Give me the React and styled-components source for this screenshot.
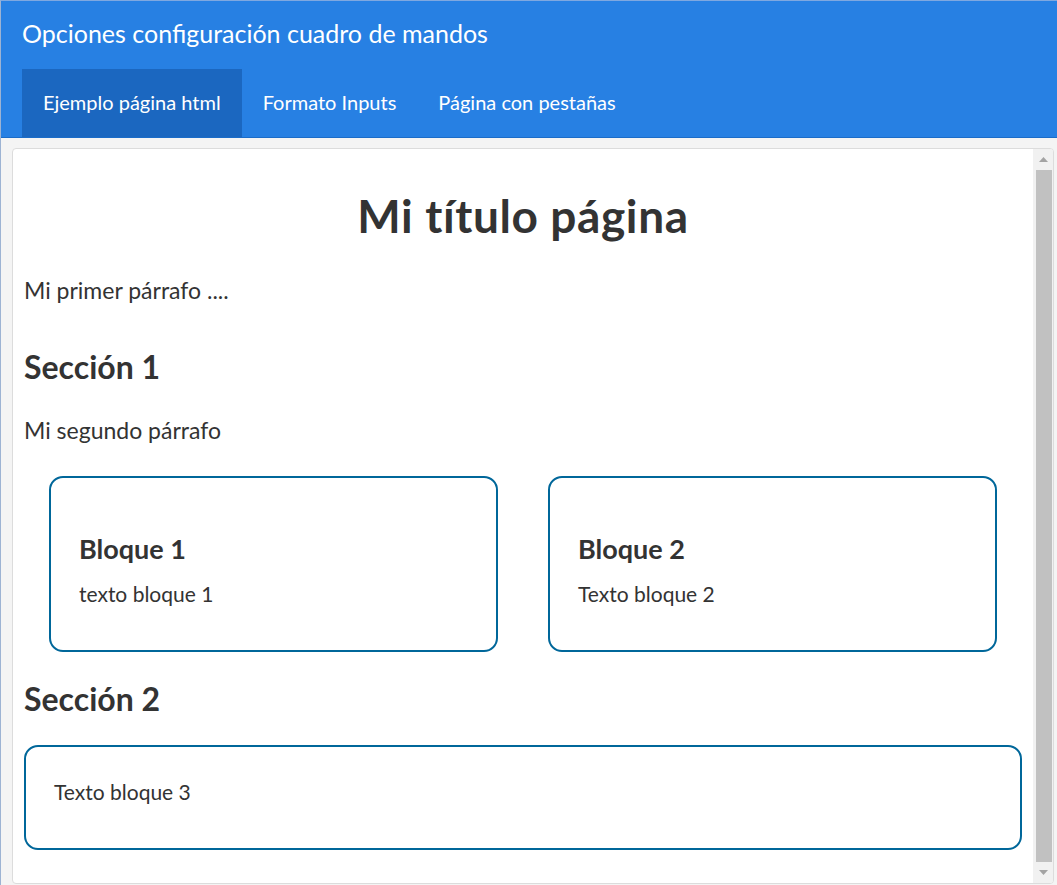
import React from "react";
import styled, { createGlobalStyle } from "styled-components";

const Global = createGlobalStyle`
  html, body { margin: 0; padding: 0; }
  body {
    background: #f4f4f4;
    font-family: Lato, "Noto Sans", sans-serif;
    color: #333;
    width: 1057px;
    height: 885px;
    overflow: hidden;
  }
`;

const Frame = styled.div`
  height: 885px;
  border-left: 1px solid #9db3d3;
  border-top: 1px solid #7fa8e0;
  box-sizing: border-box;
  display: flex;
  flex-direction: column;
`;

const Header = styled.header`
  background: #2780e3;
  border-bottom: 1px solid #1b6cc8;
  padding: 0 0 0 21px;
  display: flex;
  flex-direction: column;
`;

const AppTitle = styled.div`
  color: #fff;
  font-size: 25px;
  height: 68px;
  line-height: 64px;
`;

const Tabs = styled.nav`
  display: flex;
  height: 68px;
`;

const Tab = styled.div`
  color: #fff;
  font-size: 20px;
  padding: 0 21px 2px;
  display: flex;
  align-items: center;
  background: ${(p) => (p.$active ? "#1b67c0" : "transparent")};
`;

const Body = styled.div`
  flex: 1;
  padding: 10px 3px 1px 11px;
  display: flex;
  min-height: 0;
`;

const Panel = styled.div`
  flex: 1;
  background: #fff;
  border: 1px solid #dcdcdc;
  border-radius: 4px;
  display: flex;
  overflow: hidden;
`;

const Content = styled.main`
  flex: 1;
  padding: 0 11px 0 11px;
`;

const H1 = styled.h1`
  margin: 40px 0 0;
  font-size: 46px;
  line-height: 54px;
  font-weight: 700;
  letter-spacing: 0.6px;
  text-align: center;
`;

const P = styled.p`
  margin: ${(p) => p.$mt}px 0 0;
  font-size: 23px;
  line-height: 30px;
`;

const H2 = styled.h2`
  margin: ${(p) => p.$mt}px 0 0;
  font-size: 32px;
  line-height: 38px;
  font-weight: 700;
`;

const BlockRow = styled.div`
  margin-top: 31px;
  padding: 0 25px;
  display: grid;
  grid-template-columns: 1fr 1fr;
  gap: 50px;
`;

const Block = styled.div`
  border: 2px solid #00679a;
  border-radius: 14px;
  padding: ${(p) => p.$pad};
  height: ${(p) => p.$h}px;
  box-sizing: border-box;
`;

const BlockTitle = styled.h3`
  margin: 0;
  font-size: 27px;
  line-height: 32px;
  font-weight: 700;
`;

const BlockText = styled.p`
  margin: ${(p) => p.$mt || 0}px 0 0;
  font-size: 21px;
  line-height: 28px;
`;

const Wide = styled.div`
  margin-top: 27px;
`;

const Scrollbar = styled.div`
  width: 20px;
  background: #f1f1f1;
  display: flex;
  flex-direction: column;
  align-items: center;
`;

const Arrow = styled.div`
  height: 21px;
  width: 100%;
  display: flex;
  align-items: center;
  justify-content: center;
`;

const Thumb = styled.div`
  flex: 1;
  width: 16px;
  margin: 0 0 0 1px;
  background: #c1c1c1;
`;

function Tri({ up }) {
  return (
    <svg width="9" height="5" viewBox="0 0 9 5">
      <path d={up ? "M0 5 L4.5 0 L9 5 Z" : "M0 0 L4.5 5 L9 0 Z"} fill="#a3a3a3" />
    </svg>
  );
}

export default function App() {
  return (
    <>
      <Global />
      <Frame>
        <Header>
          <AppTitle>Opciones configuración cuadro de mandos</AppTitle>
          <Tabs>
            <Tab $active>Ejemplo página html</Tab>
            <Tab>Formato Inputs</Tab>
            <Tab>Página con pestañas</Tab>
          </Tabs>
        </Header>
        <Body>
          <Panel>
            <Content>
              <H1>Mi título página</H1>
              <P $mt={32}>Mi primer párrafo ....</P>
              <H2 $mt={43}>Sección 1</H2>
              <P $mt={29}>Mi segundo párrafo</P>
              <BlockRow>
                <Block $pad="55px 28px 0" $h={176}>
                  <BlockTitle>Bloque 1</BlockTitle>
                  <BlockText $mt={15}>texto bloque 1</BlockText>
                </Block>
                <Block $pad="55px 28px 0" $h={176}>
                  <BlockTitle>Bloque 2</BlockTitle>
                  <BlockText $mt={15}>Texto bloque 2</BlockText>
                </Block>
              </BlockRow>
              <H2 $mt={28}>Sección 2</H2>
              <Wide>
                <Block $pad="31px 28px 0" $h={105}>
                  <BlockText>Texto bloque 3</BlockText>
                </Block>
              </Wide>
            </Content>
            <Scrollbar>
              <Arrow><Tri up /></Arrow>
              <Thumb />
              <Arrow><Tri /></Arrow>
            </Scrollbar>
          </Panel>
        </Body>
      </Frame>
    </>
  );
}
